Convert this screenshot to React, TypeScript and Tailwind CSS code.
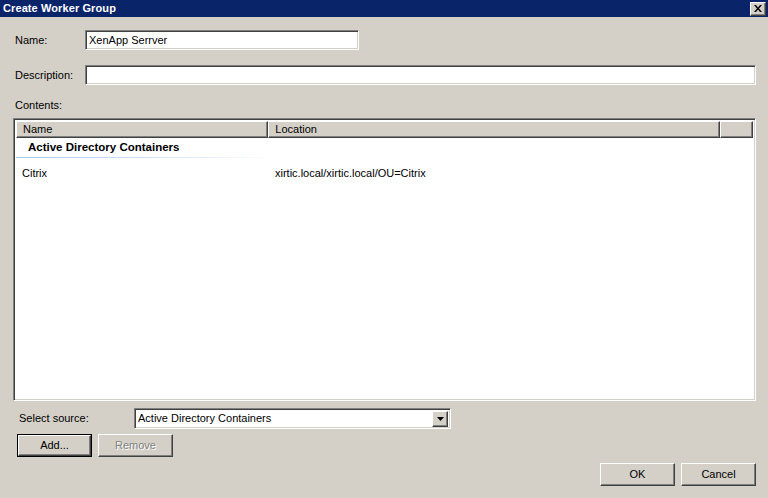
import { ReactNode } from 'react'

const sunken =
  'border border-t-[#808080] border-l-[#808080] border-b-white border-r-white shadow-[inset_1px_1px_0_#404040,inset_-1px_-1px_0_#d4d0c8]'
const raised =
  'border border-t-white border-l-white border-b-[#404040] border-r-[#404040] shadow-[inset_-1px_-1px_0_#808080]'

function Btn({ children, def, disabled, className }: { children: ReactNode; def?: boolean; disabled?: boolean; className?: string }) {
  const inner = (
    <div className={`${raised} bg-[#d4d0c8] flex items-center justify-center h-full ${disabled ? 'text-[#808080] [text-shadow:1px_1px_0_#fff]' : 'text-black'}`}>
      {children}
    </div>
  )
  return (
    <div className={`${className ?? ''} h-[23px] ${def ? 'border border-black' : ''}`}>{inner}</div>
  )
}

function HeaderCell({ label, className }: { label?: string; className?: string }) {
  return (
    <div className={`${raised} h-[17px] bg-[#d4d0c8] flex items-center pl-[6px] ${className ?? ''}`}>{label}</div>
  )
}

export default function App() {
  return (
    <div className="w-[768px] h-[498px] bg-[#d4d0c8] flex flex-col text-[11px] text-black font-['Liberation_Sans',Arial,sans-serif] overflow-hidden">
      {/* Title bar */}
      <div className="h-[17px] bg-[#0a246a] flex items-center justify-between pl-[3px] pr-[2px] shrink-0">
        <span className="text-white font-bold text-[11px] tracking-[0.1px]">Create Worker Group</span>
        <div className={`${raised} w-[16px] h-[14px] bg-[#d4d0c8] flex items-center justify-center`}>
          <svg width="8" height="7" viewBox="0 0 8 7">
            <path d="M0 0h2l2 2.5L6 0h2L5 3.5 8 7H6L4 4.5 2 7H0l3-3.5z" fill="#000" />
          </svg>
        </div>
      </div>

      {/* Name */}
      <div className="flex items-center mt-[13px] h-[20px]">
        <span className="w-[85px] pl-[15px]">Name:</span>
        <div className={`${sunken} bg-white w-[274px] h-[20px] flex items-center pl-[3px]`}>XenApp Serrver</div>
      </div>

      {/* Description */}
      <div className="flex items-center mt-[15px] h-[20px]">
        <span className="w-[85px] pl-[15px]">Description:</span>
        <div className={`${sunken} bg-white w-[671px] h-[20px]`} />
      </div>

      {/* Contents */}
      <div className="pl-[15px] mt-[13px] h-[14px] leading-[14px]">Contents:</div>

      <div className={`${sunken} bg-white ml-[13px] w-[743px] h-[283px] mt-[6px] p-[2px] flex flex-col`}>
        <div className="flex shrink-0">
          <HeaderCell label="Name" className="w-[253px]" />
          <HeaderCell label="Location" className="w-[453px]" />
          <HeaderCell className="w-[33px]" />
        </div>
        <div className="pl-[12px] mt-[1px] h-[18px] flex items-center font-bold text-[11.5px]">Active Directory Containers</div>
        <div className="h-[1px] w-[260px] bg-gradient-to-r from-[#a6c6ea] via-[#d2e2f4] to-white" />
        <div className="flex mt-[8px] h-[14px] items-center">
          <span className="w-[259px] pl-[6px]">Citrix</span>
          <span>xirtic.local/xirtic.local/OU=Citrix</span>
        </div>
      </div>

      {/* Select source */}
      <div className="flex items-center mt-[7px] h-[21px]">
        <span className="w-[134px] pl-[19px]">Select source:</span>
        <div className={`${sunken} bg-white w-[317px] h-[21px] flex items-center justify-between pl-[3px] pr-[2px]`}>
          <span>Active Directory Containers</span>
          <div className={`${raised} w-[16px] h-[16px] bg-[#d4d0c8] flex items-center justify-center`}>
            <svg width="7" height="4" viewBox="0 0 7 4">
              <path d="M0 0h7L3.5 4z" fill="#000" />
            </svg>
          </div>
        </div>
      </div>

      <div className="flex mt-[5px] ml-[17px] gap-[6px]">
        <Btn def className="w-[75px]">Add...</Btn>
        <Btn disabled className="w-[75px]">Remove</Btn>
      </div>

      <div className="flex justify-end mt-[6px] mr-[12px] gap-[6px]">
        <Btn className="w-[75px]">OK</Btn>
        <Btn className="w-[75px]">Cancel</Btn>
      </div>
    </div>
  )
}
